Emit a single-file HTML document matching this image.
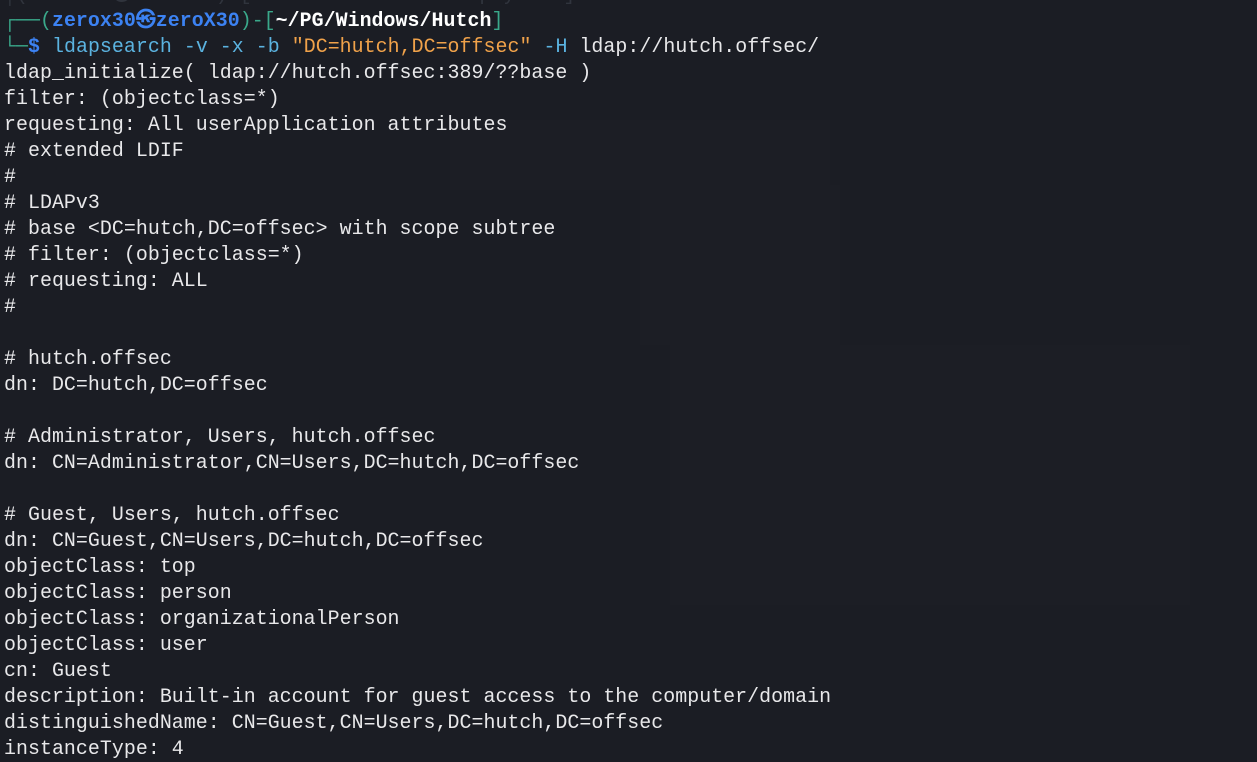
<!DOCTYPE html>
<html><head><meta charset="utf-8"><style>
html,body{margin:0;padding:0;background:#1b1d24;width:1257px;height:756px;overflow:hidden}
pre{position:absolute;left:4px;top:-18px;margin:0;font-family:"Liberation Mono","DejaVu Sans Mono",monospace;font-size:19.9px;line-height:26px;color:#e8e8ea;letter-spacing:0.05px}
.g{color:#3aa88a}.b{color:#3c82f2;font-weight:bold}.w{color:#fff;font-weight:bold}.c{color:#5bb3e0}.o{color:#f0a24a}.d{color:#30343d}
.wm{position:absolute;background:#1c1e25}
</style></head><body>
<div class="wm" style="left:450px;top:120px;width:380px;height:70px"></div>
<div class="wm" style="left:640px;top:185px;width:200px;height:160px"></div>
<div class="wm" style="left:670px;top:345px;width:520px;height:260px"></div>
<pre><span class="d">│(zerox30㉿zeroX30)-[~/PG/Windows/Hutch/payload]</span>
<span class="g">┌──(</span><span class="b">zerox30㉿zeroX30</span><span class="g">)-[</span><span class="w">~/PG/Windows/Hutch</span><span class="g">]</span>
<span class="g">└─</span><span class="b">$</span> <span class="c">ldapsearch -v -x -b</span> <span class="o">"DC=hutch,DC=offsec"</span> <span class="c">-H</span> ldap://hutch.offsec/
ldap_initialize( ldap://hutch.offsec:389/??base )
filter: (objectclass=*)
requesting: All userApplication attributes
# extended LDIF
#
# LDAPv3
# base &lt;DC=hutch,DC=offsec&gt; with scope subtree
# filter: (objectclass=*)
# requesting: ALL
#

# hutch.offsec
dn: DC=hutch,DC=offsec

# Administrator, Users, hutch.offsec
dn: CN=Administrator,CN=Users,DC=hutch,DC=offsec

# Guest, Users, hutch.offsec
dn: CN=Guest,CN=Users,DC=hutch,DC=offsec
objectClass: top
objectClass: person
objectClass: organizationalPerson
objectClass: user
cn: Guest
description: Built-in account for guest access to the computer/domain
distinguishedName: CN=Guest,CN=Users,DC=hutch,DC=offsec
instanceType: 4</pre>
</body></html>
